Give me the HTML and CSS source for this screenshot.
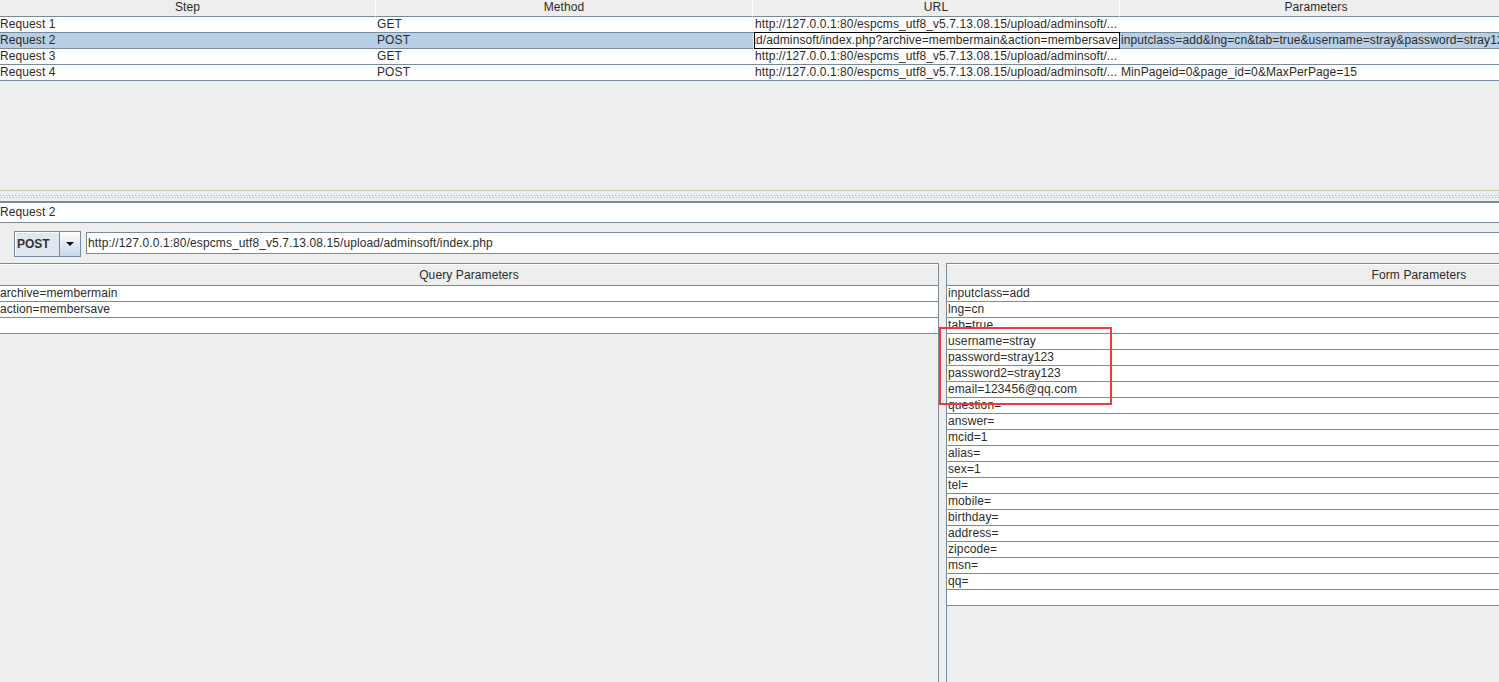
FILE: index.html
```html
<!DOCTYPE html>
<html>
<head>
<meta charset="utf-8">
<title>Requests</title>
<link rel="stylesheet" href="styles.css">
</head>
<body>
<div class="app">
  <div class="top">
    <div class="steps">
      <div class="th">Step</div>
      <div class="th">Method</div>
      <div class="th">URL</div>
      <div class="th last">Parameters</div>

      <div class="td step">Request 1</div>
      <div class="td">GET</div>
      <div class="td url">http://127.0.0.1:80/espcms_utf8_v5.7.13.08.15/upload/adminsoft/...</div>
      <div class="td"></div>

      <div class="td step sel">Request 2</div>
      <div class="td sel">POST</div>
      <div class="td sel editor"><span>http://127.0.0.1:80/espcms_utf8_v5.7.13.08.15/upload/adminsoft/index.php?archive=membermain&amp;action=membersave</span></div>
      <div class="td sel par">inputclass=add&amp;lng=cn&amp;tab=true&amp;username=stray&amp;password=stray123&amp;password2=stray123&amp;email=123456@qq.com&amp;question=&amp;answer=</div>

      <div class="td step">Request 3</div>
      <div class="td">GET</div>
      <div class="td url">http://127.0.0.1:80/espcms_utf8_v5.7.13.08.15/upload/adminsoft/...</div>
      <div class="td"></div>

      <div class="td step">Request 4</div>
      <div class="td">POST</div>
      <div class="td url">http://127.0.0.1:80/espcms_utf8_v5.7.13.08.15/upload/adminsoft/...</div>
      <div class="td par">MinPageid=0&amp;page_id=0&amp;MaxPerPage=15</div>
    </div>
  </div>

  <div class="divider">
    <div class="dots"></div>
    <div class="dots shift"></div>
  </div>

  <div class="namebar">Request 2</div>

  <div class="urlrow">
    <div class="combo">
      <div class="combo-val">POST</div>
      <div class="combo-btn"><span class="arrow"></span></div>
    </div>
    <div class="urlfield">http://127.0.0.1:80/espcms_utf8_v5.7.13.08.15/upload/adminsoft/index.php</div>
  </div>

  <div class="params">
    <div class="qpanel">
      <div class="ph">Query Parameters</div>
      <div class="pr q">archive=membermain</div>
      <div class="pr q">action=membersave</div>
      <div class="pr q"></div>
    </div>
    <div class="pgap"></div>
    <div class="fpanel">
      <div class="ftable">
        <div class="ph">Form Parameters</div>
        <div class="pr">inputclass=add</div>
        <div class="pr">lng=cn</div>
        <div class="pr">tab=true</div>
        <div class="pr">username=stray</div>
        <div class="pr">password=stray123</div>
        <div class="pr">password2=stray123</div>
        <div class="pr">email=123456@qq.com</div>
        <div class="pr">question=</div>
        <div class="pr">answer=</div>
        <div class="pr">mcid=1</div>
        <div class="pr">alias=</div>
        <div class="pr">sex=1</div>
        <div class="pr">tel=</div>
        <div class="pr">mobile=</div>
        <div class="pr">birthday=</div>
        <div class="pr">address=</div>
        <div class="pr">zipcode=</div>
        <div class="pr">msn=</div>
        <div class="pr">qq=</div>
        <div class="pr"></div>
      </div>
    </div>
  </div>

  <div class="highlight"></div>
</div>
</body>
</html>
```

FILE: styles.css
```css
html, body {
  margin: 0;
  padding: 0;
  overflow: hidden;
  background: #eeeeee;
}

.app {
  position: relative;
  width: 1499px;
  height: 682px;
  overflow: hidden;
  font-family: "Liberation Sans", Arial, sans-serif;
  font-size: 12px;
  letter-spacing: 0.1px;
  color: #2b2b2b;
  background: #eeeeee;
}

/* ---------- top table ---------- */
.top {
  height: 190px;
}

.steps {
  display: grid;
  grid-template-columns: 376px 377px 367px 392px;
  width: 1512px;
}

.th {
  height: 16px;
  line-height: 15px;
  text-align: center;
  background: #eeeeee;
  border-bottom: 1px solid #7a8a99;
  border-right: 1px solid #7a8a99;
  box-sizing: content-box;
  white-space: nowrap;
  overflow: hidden;
}

.th.last {
  border-right: none;
}

.steps .th:not(:first-child) {
  margin-left: -1px;
  border-left: 1px solid #ffffff;
}

.td {
  height: 15px;
  line-height: 15px;
  background: #ffffff;
  border-bottom: 1px solid #7a8a99;
  padding-left: 1px;
  white-space: nowrap;
  overflow: hidden;
}

.td.step {
  padding-left: 0;
}

.td.url {
  padding-left: 2px;
}

.td.par {
  padding-left: 1px;
}

.td.sel {
  background: #b8cfe5;
}

.td.editor {
  margin-top: -1px;
  margin-left: 1px;
  margin-right: 0;
  height: 15px;
  line-height: 15px;
  border: 1px solid #000000;
  background: #ffffff;
  padding: 0 1px 0 0;
  display: flex;
  justify-content: flex-end;
  overflow: hidden;
}

.td.editor span {
  flex: 0 0 auto;
  white-space: nowrap;
}

/* ---------- divider ---------- */
.divider {
  border-top: 1px solid #c9c9b6;
  border-bottom: 2px solid #7a8a99;
  padding-top: 4px;
  padding-bottom: 3px;
  height: 3px;
  box-sizing: content-box;
  display: flex;
  flex-direction: column;
  gap: 1px;
}

.dots {
  height: 1px;
  background-image: repeating-linear-gradient(90deg, #a3afbb 0 1px, transparent 1px 3px);
}

.dots.shift {
  background-position: 1px 0;
}

/* ---------- name bar ---------- */
.namebar {
  height: 19px;
  line-height: 19px;
  background: #ffffff;
  border-bottom: 1px solid #7a8a99;
  white-space: nowrap;
}

/* ---------- url row ---------- */
.urlrow {
  display: flex;
  align-items: flex-start;
  height: 26px;
  margin-top: 8px;
  margin-bottom: 6px;
}

.combo {
  margin-left: 14px;
  width: 67px;
  height: 26px;
  box-sizing: border-box;
  border: 1px solid #7a8a99;
  display: flex;
}

.combo-val {
  width: 45px;
  box-sizing: border-box;
  padding-left: 2px;
  font-weight: bold;
  letter-spacing: 0;
  line-height: 24px;
  color: #333333;
  background: #dfe8f1;
  border-right: 1px solid #7a8a99;
  box-shadow: inset 1px 1px 0 #ffffff;
}

.combo-btn {
  flex: 1;
  display: flex;
  align-items: center;
  justify-content: center;
  background: linear-gradient(#ffffff, #c4d7ea);
}

.arrow {
  width: 0;
  height: 0;
  border-left: 4px solid transparent;
  border-right: 4px solid transparent;
  border-top: 4px solid #111111;
}

.urlfield {
  flex: 1;
  margin-left: 5px;
  margin-top: 1px;
  margin-right: -10px;
  height: 22px;
  box-sizing: border-box;
  border: 1px solid #7a8a99;
  background: #ffffff;
  line-height: 20px;
  padding-left: 1px;
  white-space: nowrap;
  overflow: hidden;
}

/* ---------- params ---------- */
.params {
  display: flex;
  height: 419px;
}

.qpanel {
  flex: 0 0 938px;
  border-top: 1px solid #7a8a99;
  border-right: 1px solid #7a8a99;
  background: #eeeeee;
}

.pgap {
  flex: 0 0 7px;
}

.fpanel {
  flex: 1;
  border-top: 1px solid #7a8a99;
  border-left: 1px solid #7a8a99;
  background: #eeeeee;
  overflow: hidden;
}

.ftable {
  width: 944px;
}

.ph {
  height: 20px;
  line-height: 20px;
  text-align: center;
  border-top: 1px solid #ffffff;
  border-bottom: 1px solid #7a8a99;
  background: #eeeeee;
  white-space: nowrap;
}

.pr {
  height: 15px;
  line-height: 15px;
  background: #ffffff;
  border-bottom: 1px solid #7a8a99;
  padding-left: 1px;
  white-space: nowrap;
  overflow: hidden;
}

.pr.q {
  padding-left: 0;
}

/* ---------- annotation overlay ---------- */
.highlight {
  position: absolute;
  left: 939px;
  top: 327px;
  width: 173px;
  height: 78px;
  box-sizing: border-box;
  border: 2px solid #ee3b3b;
}
```
